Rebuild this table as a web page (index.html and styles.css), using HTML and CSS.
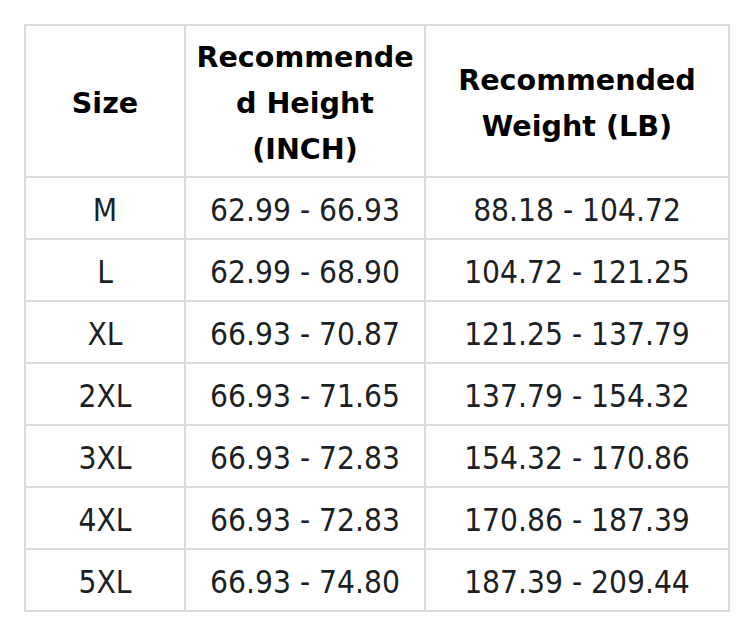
FILE: index.html
```html
<!DOCTYPE html>
<html>
<head>
<meta charset="utf-8">
<link rel="stylesheet" href="styles.css">
</head>
<body>
<table class="size-table">
  <colgroup>
    <col class="c1"><col class="c2"><col class="c3">
  </colgroup>
  <thead>
    <tr>
      <th>Size</th>
      <th>Recommende<br>d Height<br>(INCH)</th>
      <th>Recommended<br>Weight (LB)</th>
    </tr>
  </thead>
  <tbody>
    <tr><td>M</td><td>62.99 - 66.93</td><td>88.18 - 104.72</td></tr>
    <tr><td>L</td><td>62.99 - 68.90</td><td>104.72 - 121.25</td></tr>
    <tr><td>XL</td><td>66.93 - 70.87</td><td>121.25 - 137.79</td></tr>
    <tr><td>2XL</td><td>66.93 - 71.65</td><td>137.79 - 154.32</td></tr>
    <tr><td>3XL</td><td>66.93 - 72.83</td><td>154.32 - 170.86</td></tr>
    <tr><td>4XL</td><td>66.93 - 72.83</td><td>170.86 - 187.39</td></tr>
    <tr><td>5XL</td><td>66.93 - 74.80</td><td>187.39 - 209.44</td></tr>
  </tbody>
</table>
</body>
</html>
```
FILE: styles.css
```css
html, body {
  margin: 0;
  padding: 0;
  background: #ffffff;
}
.size-table {
  margin: 24px 0 0 24px;
  border-collapse: separate;
  border-spacing: 0;
  table-layout: fixed;
  width: 706px;
  border-left: 2px solid #dadada;
  border-top: 2px solid #dadada;
}
.c1 { width: 160px; }
.c2 { width: 240px; }
.c3 { width: 304px; }
.size-table th,
.size-table td {
  border-right: 2px solid #dadada;
  border-bottom: 2px solid #dadada;
  padding: 0;
  text-align: center;
  vertical-align: middle;
  white-space: nowrap;
}
.size-table th {
  height: 150px;
  padding-top: 4px;
  box-sizing: border-box;
  height: 152px;
  font-family: "DejaVu Sans", Verdana, sans-serif;
  font-weight: bold;
  font-size: 28.6px;
  line-height: 46px;
  color: #000000;
}
.size-table td {
  height: 62px;
  box-sizing: border-box;
  padding-top: 3px;
  font-family: "DejaVu Sans Condensed", "DejaVu Sans", sans-serif;
  font-size: 31.4px;
  line-height: 36px;
  color: #1c1f24;
}
```
